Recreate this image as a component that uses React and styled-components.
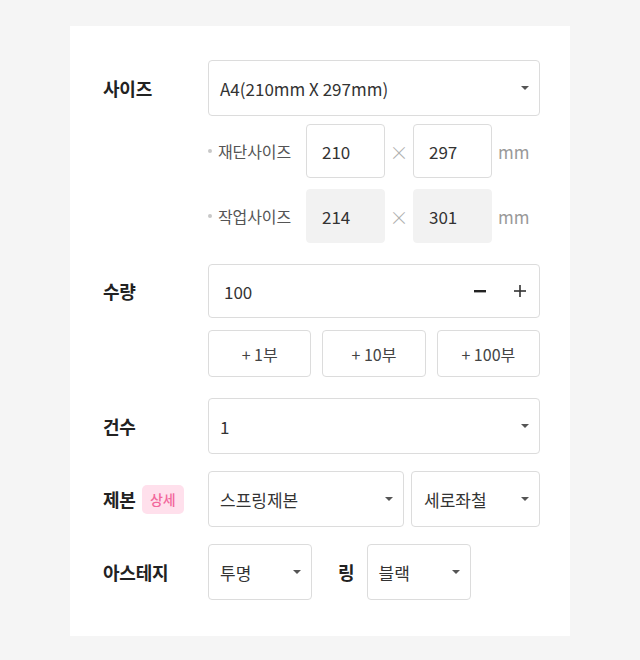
import React from 'react';
import styled, { createGlobalStyle } from 'styled-components';

const GlobalStyle = createGlobalStyle`
  html, body {
    margin: 0;
    padding: 0;
    background: #f5f5f5;
    font-family: "Noto Sans CJK KR", "Noto Sans", sans-serif;
    color: #333;
  }
`;

const Page = styled.div`
  padding-top: 26px;
  display: flex;
  justify-content: center;
`;

const Card = styled.div`
  width: 500px;
  box-sizing: border-box;
  background: #fff;
  padding: 34px 30px 36px 33px;
  display: flex;
  flex-direction: column;
`;

const Section = styled.div`
  display: grid;
  grid-template-columns: 105px 332px;
  margin-top: ${props => props.$mt || 0}px;
`;

const Label = styled.div`
  height: ${props => props.$h || 56}px;
  display: flex;
  align-items: center;
  gap: 6px;
  font-size: 18px;
  font-weight: 700;
  color: #222;
  letter-spacing: -0.2px;
`;

const Badge = styled.span`
  display: inline-flex;
  align-items: center;
  justify-content: center;
  width: 42px;
  height: 29px;
  border-radius: 5px;
  background: #ffe0ec;
  color: #f2679b;
  font-size: 14px;
  font-weight: 500;
`;

const Controls = styled.div`
  display: flex;
  flex-direction: column;
`;

const Select = styled.div`
  box-sizing: border-box;
  width: ${props => (props.$w ? `${props.$w}px` : '100%')};
  height: 56px;
  border: 1px solid #dcdcdc;
  border-radius: 4px;
  background: #fff;
  display: flex;
  align-items: center;
  padding: 0 10px 0 ${props => props.$pl || 11}px;
  font-size: 17px;
  color: #333;
  flex-shrink: 0;
`;

const SelectText = styled.span`
  flex: 1;
  white-space: nowrap;
`;

const Caret = styled.span`
  width: 0;
  height: 0;
  border-left: 4px solid transparent;
  border-right: 4px solid transparent;
  border-top: 4px solid #555;
`;

const SubRow = styled.div`
  display: flex;
  align-items: center;
  height: 54px;
  margin-top: ${props => props.$mt || 0}px;
`;

const SubLabel = styled.div`
  width: 98px;
  display: flex;
  align-items: center;
  font-size: 16px;
  color: #555;
  letter-spacing: -0.1px;
`;

const Dot = styled.span`
  width: 4px;
  height: 4px;
  border-radius: 50%;
  background: #c8c8c8;
  margin: 0 6px 0 0;
`;

const Field = styled.div`
  box-sizing: border-box;
  width: 79px;
  height: 54px;
  border-radius: 4px;
  border: 1px solid ${props => (props.$readonly ? '#f2f2f2' : '#dcdcdc')};
  background: ${props => (props.$readonly ? '#f2f2f2' : '#fff')};
  display: flex;
  align-items: center;
  padding-left: 15px;
  font-size: 17px;
  color: #333;
`;

const Times = styled.span`
  width: 28px;
  text-align: center;
  color: #b0b0b0;
  font-size: 19px;
  font-weight: 300;
`;

const Unit = styled.span`
  margin-left: 6px;
  color: #999;
  font-size: 17px;
`;

const Counter = styled.div`
  box-sizing: border-box;
  height: 54px;
  border: 1px solid #dcdcdc;
  border-radius: 4px;
  display: flex;
  align-items: center;
  padding: 0 13px 0 15px;
  font-size: 17px;
`;

const CounterValue = styled.span`
  flex: 1;
`;

const StepButton = styled.span`
  display: flex;
  align-items: center;
  justify-content: center;
  width: 12px;
  height: 12px;
  margin-left: ${props => props.$ml || 0}px;
`;

const QuickRow = styled.div`
  display: grid;
  grid-template-columns: repeat(3, 1fr);
  column-gap: 11px;
  margin-top: 12px;
`;

const QuickButton = styled.div`
  box-sizing: border-box;
  height: 47px;
  border: 1px solid #dcdcdc;
  border-radius: 4px;
  display: flex;
  align-items: center;
  justify-content: center;
  font-size: 16px;
  color: #444;
`;

const InlineRow = styled.div`
  display: flex;
  align-items: center;
  gap: ${props => props.$gap || 0}px;
`;

const InlineLabel = styled.span`
  font-size: 18px;
  font-weight: 700;
  color: #222;
  margin: 0 12px 0 26px;
`;

function Dropdown({ value, w, pl }) {
  return (
    <Select $w={w} $pl={pl}>
      <SelectText>{value}</SelectText>
      <Caret />
    </Select>
  );
}

function SizeRow({ label, w, h, readonly, mt }) {
  return (
    <SubRow $mt={mt}>
      <SubLabel>
        <Dot />
        {label}
      </SubLabel>
      <Field $readonly={readonly}>{w}</Field>
      <Times>×</Times>
      <Field $readonly={readonly}>{h}</Field>
      <Unit>mm</Unit>
    </SubRow>
  );
}

export default function App() {
  return (
    <>
      <GlobalStyle />
      <Page>
        <Card>
          <Section>
            <Label>사이즈</Label>
            <Controls>
              <Dropdown value="A4(210mm X 297mm)" />
              <SizeRow label="재단사이즈" w="210" h="297" mt={8} />
              <SizeRow label="작업사이즈" w="214" h="301" readonly mt={11} />
            </Controls>
          </Section>

          <Section $mt={21}>
            <Label $h={54}>수량</Label>
            <Controls>
              <Counter>
                <CounterValue>100</CounterValue>
                <StepButton>
                  <svg width="12" height="12" viewBox="0 0 12 12">
                    <rect x="0" y="5" width="12" height="2.4" fill="#222" />
                  </svg>
                </StepButton>
                <StepButton $ml={28}>
                  <svg width="12" height="12" viewBox="0 0 12 12">
                    <rect x="0" y="5.2" width="12" height="1.6" fill="#333" />
                    <rect x="5.2" y="0" width="1.6" height="12" fill="#333" />
                  </svg>
                </StepButton>
              </Counter>
              <QuickRow>
                <QuickButton>+ 1부</QuickButton>
                <QuickButton>+ 10부</QuickButton>
                <QuickButton>+ 100부</QuickButton>
              </QuickRow>
            </Controls>
          </Section>

          <Section $mt={21}>
            <Label>건수</Label>
            <Dropdown value="1" />
          </Section>

          <Section $mt={17}>
            <Label>
              제본<Badge>상세</Badge>
            </Label>
            <InlineRow $gap={7}>
              <Dropdown value="스프링제본" w={196} />
              <Dropdown value="세로좌철" w={129} pl={12} />
            </InlineRow>
          </Section>

          <Section $mt={17}>
            <Label>아스테지</Label>
            <InlineRow>
              <Dropdown value="투명" w={104} />
              <InlineLabel>링</InlineLabel>
              <Dropdown value="블랙" w={104} />
            </InlineRow>
          </Section>
        </Card>
      </Page>
    </>
  );
}
